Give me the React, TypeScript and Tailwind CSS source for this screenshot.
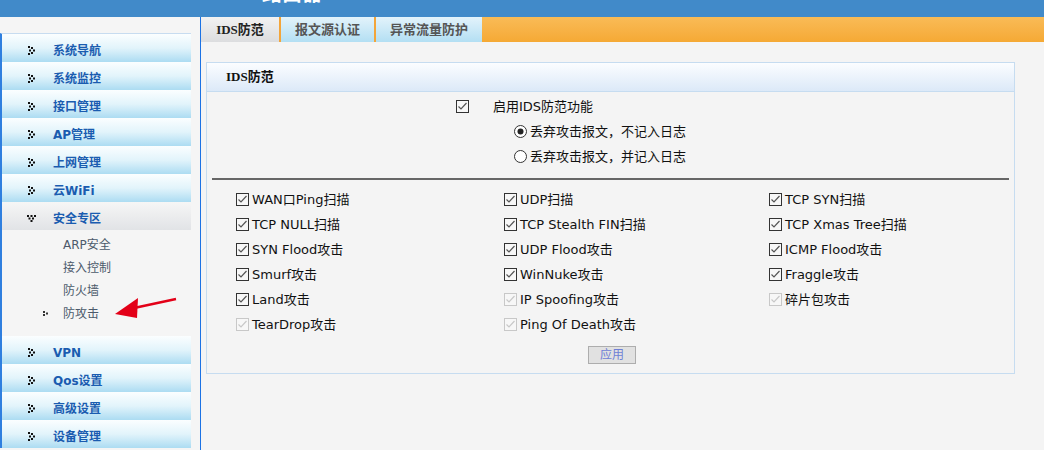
import React from "react";

const font = "font-['DejaVu_Sans','Noto_Sans_CJK_SC',sans-serif]";

const menuTop = ["系统导航", "系统监控", "接口管理", "AP管理", "上网管理", "云WiFi"];
const menuBottom = ["VPN", "Qos设置", "高级设置", "设备管理"];
const subItems = ["ARP安全", "接入控制", "防火墙", "防攻击"];

const attacks: { label: string; disabled?: boolean }[] = [
  { label: "WAN口Ping扫描" },
  { label: "UDP扫描" },
  { label: "TCP SYN扫描" },
  { label: "TCP NULL扫描" },
  { label: "TCP Stealth FIN扫描" },
  { label: "TCP Xmas Tree扫描" },
  { label: "SYN Flood攻击" },
  { label: "UDP Flood攻击" },
  { label: "ICMP Flood攻击" },
  { label: "Smurf攻击" },
  { label: "WinNuke攻击" },
  { label: "Fraggle攻击" },
  { label: "Land攻击" },
  { label: "IP Spoofing攻击", disabled: true },
  { label: "碎片包攻击", disabled: true },
  { label: "TearDrop攻击", disabled: true },
  { label: "Ping Of Death攻击", disabled: true },
];

function DotsRight() {
  return (
    <svg width="8" height="9" viewBox="0 0 8 9" className="shrink-0">
      <rect x="0" y="0" width="2" height="2" fill="#111" />
      <rect x="3" y="1" width="2" height="2" fill="#111" />
      <rect x="1" y="3.5" width="2" height="2" fill="#111" />
      <rect x="5" y="3.5" width="2" height="2" fill="#111" />
      <rect x="3" y="6" width="2" height="2" fill="#111" />
      <rect x="0" y="7" width="2" height="2" fill="#111" />
    </svg>
  );
}

function DotsDown() {
  return (
    <svg width="10" height="7" viewBox="0 0 10 7" className="shrink-0">
      <rect x="0" y="0" width="2" height="2" fill="#111" />
      <rect x="3.5" y="0" width="2" height="2" fill="#111" />
      <rect x="7" y="0" width="2" height="2" fill="#111" />
      <rect x="1.5" y="2.5" width="2" height="2" fill="#111" />
      <rect x="5" y="2.5" width="2" height="2" fill="#111" />
      <rect x="3.5" y="5" width="2" height="2" fill="#111" />
    </svg>
  );
}

function MenuItem({ label }: { label: string }) {
  return (
    <div className="h-[28px] pt-[5px] flex items-center bg-gradient-to-b from-[#fbfeff] via-[#e2f4fb] to-[#acdcf2]">
      <div className="w-[51px] pl-[26px] flex items-center">
        <DotsRight />
      </div>
      <span className="text-[12px] font-bold text-[#1a5cb0]">{label}</span>
    </div>
  );
}

function Check({ disabled }: { disabled?: boolean }) {
  const c = disabled ? "#c8c8c8" : "#333";
  return (
    <svg width="13" height="13" viewBox="0 0 13 13" className="shrink-0">
      <rect x="0.5" y="0.5" width="12" height="12" fill="#f7f7f7" stroke={c} />
      <path d="M2.5 6.5 L5 9 L10.5 3" fill="none" stroke={disabled ? "#c8c8c8" : "#555"} strokeWidth="1.2" />
    </svg>
  );
}

function Radio({ checked }: { checked?: boolean }) {
  return (
    <svg width="13" height="13" viewBox="0 0 13 13" className="shrink-0">
      <circle cx="6.5" cy="6.5" r="6" fill="#fff" stroke="#333" />
      {checked && <circle cx="6.5" cy="6.5" r="3" fill="#222" />}
    </svg>
  );
}

export default function App() {
  return (
    <div className={`w-[1044px] h-[450px] overflow-hidden bg-[#f4f4f4] flex flex-col ${font}`}>
      <div className="h-[17px] shrink-0 bg-[#418ac9] overflow-hidden pl-[262px]">
        <div className="-mt-[16px] text-[20px] font-bold text-white leading-[20px]">路由器</div>
      </div>
      <div className="flex flex-1 min-h-0 relative">
        <div className="w-[201px] shrink-0 bg-[#f5f5f5] border-r border-[#1b72e4] pt-[16px]">
          <div className="w-[191px] border-l-2 border-[#2f7fdf] border-t-[1px] border-t-[#c7dcf0]">
            {menuTop.map((m) => (
              <MenuItem key={m} label={m} />
            ))}
            <div className="h-[28px] pt-[5px] flex items-center bg-gradient-to-b from-[#f6f6f6] to-[#e1e3e6]">
              <div className="w-[51px] pl-[25px] flex items-center">
                <DotsDown />
              </div>
              <span className="text-[12px] font-bold text-[#1a5cb0]">安全专区</span>
            </div>
            <div className="h-[106px] bg-[#f5f5f5] pt-[3px]">
              {subItems.map((s, i) => (
                <div key={s} className="h-[23px] flex items-center">
                  <div className="w-[61px] pl-[41px] flex items-center">
                    {i === 3 && (
                      <svg width="6" height="5" viewBox="0 0 6 5">
                        <rect x="0" y="0" width="2" height="2" fill="#333" />
                        <rect x="3" y="1.5" width="2" height="2" fill="#333" />
                        <rect x="0" y="3" width="2" height="2" fill="#333" />
                      </svg>
                    )}
                  </div>
                  <span className="text-[12px] text-[#4c5a6b]">{s}</span>
                </div>
              ))}
            </div>
            {menuBottom.map((m) => (
              <MenuItem key={m} label={m} />
            ))}
          </div>
        </div>

        <div className="flex-1 flex flex-col">
          <div className="h-[25px] flex bg-gradient-to-b from-[#f9bb56] to-[#f5a934]">
            <div className="w-[78px] flex items-center justify-center bg-gradient-to-b from-[#f2f2f2] to-[#dcdddf] text-[13px] font-bold text-[#222] font-['Liberation_Serif','Noto_Sans_CJK_SC',serif]">
              IDS防范
            </div>
            <div className="w-[2px] bg-[#f3a53a]" />
            <div className="w-[93px] flex items-center justify-center bg-gradient-to-b from-[#e3f3fb] to-[#b3dff3] text-[13px] font-bold text-[#555]">
              报文源认证
            </div>
            <div className="w-[2px] bg-[#f3a53a]" />
            <div className="w-[106px] flex items-center justify-center bg-gradient-to-b from-[#e3f3fb] to-[#b3dff3] text-[13px] font-bold text-[#555]">
              异常流量防护
            </div>
          </div>

          <div className="ml-[5px] mt-[20px] w-[809px] border border-[#c6dcf0] bg-[#f4f4f4]">
            <div className="h-[29px] flex items-center pl-[19px] bg-gradient-to-b from-[#fbfdff] to-[#dce9f8] border-b border-[#c6dcf0] text-[13px] font-bold text-[#111] font-['Liberation_Serif','Noto_Sans_CJK_SC',serif]">
              IDS防范
            </div>
            <div className="pt-[2px] text-[13px] text-[#111]">
              <div className="h-[25px] flex items-center pl-[249px]">
                <Check />
                <span className="ml-[24px]">启用IDS防范功能</span>
              </div>
              <div className="h-[25px] flex items-center pl-[307px]">
                <Radio checked />
                <span className="ml-[3px]">丢弃攻击报文，不记入日志</span>
              </div>
              <div className="h-[25px] flex items-center pl-[307px]">
                <Radio />
                <span className="ml-[3px]">丢弃攻击报文，并记入日志</span>
              </div>
              <div className="mt-[9px] mx-[5px] h-[2px] bg-[#666]" />
              <div className="mt-[7px] pl-[29px] grid grid-cols-[268px_265px_1fr]">
                {attacks.map((a) => (
                  <div key={a.label} className="h-[25px] flex items-center">
                    <Check disabled={a.disabled} />
                    <span className="ml-[3px] whitespace-nowrap">{a.label}</span>
                  </div>
                ))}
              </div>
              <div className="mt-[9px] pb-[9px] flex justify-center pl-[3px]">
                <button className="w-[48px] h-[18px] bg-[#e1e1e1] border border-[#adadad] text-[12px] text-[#6f7fd6] leading-none">
                  应用
                </button>
              </div>
            </div>
          </div>
        </div>

        <svg className="absolute left-0 top-0 pointer-events-none" width="200" height="433" viewBox="0 17 200 433">
          <line x1="176" y1="299" x2="134" y2="308" stroke="#e30018" strokeWidth="2.5" />
          <polygon points="115,314 138,298 137,318" fill="#e30018" />
        </svg>
      </div>
    </div>
  );
}
